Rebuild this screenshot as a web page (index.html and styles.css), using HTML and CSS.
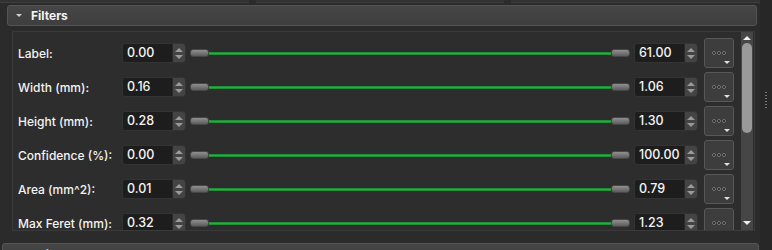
FILE: index.html
```html
<!DOCTYPE html>
<html lang="en">
<head>
    <meta charset="UTF-8">
    <title>Filters</title>
    <link rel="stylesheet" href="styles.css">
</head>
<body>
    <div class="window">
        <div class="main">
            <div class="tabs">
                <div class="tab"></div>
                <div class="tab"></div>
                <div class="tab"></div>
            </div>

            <div class="section-header"><span class="caret"></span>Filters</div>

            <div class="frame">
                <div class="rows">
                    <div class="row">
                        <span class="name">Label:</span>
                        <div class="spin"><span class="val">0.00</span><span class="arrows"><i class="up"></i><i class="down"></i></span></div>
                        <div class="range"><span class="knob"></span><span class="track"></span><span class="knob"></span></div>
                        <div class="spin"><span class="val">61.00</span><span class="arrows"><i class="up"></i><i class="down"></i></span></div>
                        <button class="more"><span class="dots"><i></i><i></i><i></i></span><span class="drop"></span></button>
                    </div>
                    <div class="row">
                        <span class="name">Width (mm):</span>
                        <div class="spin"><span class="val">0.16</span><span class="arrows"><i class="up"></i><i class="down"></i></span></div>
                        <div class="range"><span class="knob"></span><span class="track"></span><span class="knob"></span></div>
                        <div class="spin"><span class="val">1.06</span><span class="arrows"><i class="up"></i><i class="down"></i></span></div>
                        <button class="more"><span class="dots"><i></i><i></i><i></i></span><span class="drop"></span></button>
                    </div>
                    <div class="row">
                        <span class="name">Height (mm):</span>
                        <div class="spin"><span class="val">0.28</span><span class="arrows"><i class="up"></i><i class="down"></i></span></div>
                        <div class="range"><span class="knob"></span><span class="track"></span><span class="knob"></span></div>
                        <div class="spin"><span class="val">1.30</span><span class="arrows"><i class="up"></i><i class="down"></i></span></div>
                        <button class="more"><span class="dots"><i></i><i></i><i></i></span><span class="drop"></span></button>
                    </div>
                    <div class="row">
                        <span class="name">Confidence (%):</span>
                        <div class="spin"><span class="val">0.00</span><span class="arrows"><i class="up"></i><i class="down"></i></span></div>
                        <div class="range"><span class="knob"></span><span class="track"></span><span class="knob"></span></div>
                        <div class="spin"><span class="val">100.00</span><span class="arrows"><i class="up"></i><i class="down"></i></span></div>
                        <button class="more"><span class="dots"><i></i><i></i><i></i></span><span class="drop"></span></button>
                    </div>
                    <div class="row">
                        <span class="name">Area (mm^2):</span>
                        <div class="spin"><span class="val">0.01</span><span class="arrows"><i class="up"></i><i class="down"></i></span></div>
                        <div class="range"><span class="knob"></span><span class="track"></span><span class="knob"></span></div>
                        <div class="spin"><span class="val">0.79</span><span class="arrows"><i class="up"></i><i class="down"></i></span></div>
                        <button class="more"><span class="dots"><i></i><i></i><i></i></span><span class="drop"></span></button>
                    </div>
                    <div class="row">
                        <span class="name">Max Feret (mm):</span>
                        <div class="spin"><span class="val">0.32</span><span class="arrows"><i class="up"></i><i class="down"></i></span></div>
                        <div class="range"><span class="knob"></span><span class="track"></span><span class="knob"></span></div>
                        <div class="spin"><span class="val">1.23</span><span class="arrows"><i class="up"></i><i class="down"></i></span></div>
                        <button class="more"><span class="dots"><i></i><i></i><i></i></span><span class="drop"></span></button>
                    </div>
                </div>

                <div class="scrollbar">
                    <span class="arrow-up"></span>
                    <div class="groove"><span class="thumb"></span></div>
                    <span class="arrow-down"></span>
                </div>
            </div>

            <div class="section-header next"><span class="caret"></span>Edit</div>
        </div>

        <div class="splitter"><span class="grip"></span></div>
    </div>
</body>
</html>
```

FILE: styles.css
```css
html, body {
    margin: 0;
    padding: 0;
}
body {
    background-color: #2b2b2b;
    font-family: Inter, "Open Sans", "Liberation Sans", sans-serif;
    font-size: 12px;
    color: #f4f4f4;
    width: 772px;
    height: 250px;
    overflow: hidden;
}
.window {
    display: flex;
    height: 250px;
    overflow: hidden;
}
.main {
    width: 760px;
    height: 250px;
    overflow: hidden;
}
.tabs {
    display: flex;
    gap: 7px;
    height: 3px;
}
.tab {
    flex: 1;
    background-color: #323232;
    border-bottom: 1px solid #3e3e3e;
}
.section-header {
    margin: 2px 0 0 7px;
    width: 748px;
    height: 19px;
    border: 1px solid #555;
    border-radius: 3px;
    background: linear-gradient(#464646, #3e3e3e);
    display: flex;
    align-items: center;
    font-weight: 700;
    font-size: 12px;
}
.caret {
    width: 0;
    height: 0;
    border-left: 3px solid transparent;
    border-right: 3px solid transparent;
    border-top: 3px solid #d0d0d0;
    margin: 0 9px 0 8px;
}
.section-header.next {
    margin: 12px 0 0 2px;
    width: 757px;
    align-items: flex-start;
    padding-top: 3px;
    box-sizing: border-box;
    height: 19px;
}
.section-header.next .caret {
    margin: 5px 9px 0 13px;
}
.frame {
    margin: 5px 0 0 12px;
    width: 741px;
    height: 198px;
    border: 1px solid #3a3a3a;
    background-color: #2d2d2d;
    display: flex;
    overflow: hidden;
}
.rows {
    width: 728px;
    padding-top: 4px;
}
.row {
    height: 34px;
    display: flex;
    align-items: center;
    padding-left: 5px;
}
.name {
    width: 104px;
    font-weight: 500;
    font-size: 12px;
}
.spin {
    width: 64px;
    height: 20px;
    box-sizing: border-box;
    border: 1px solid #333;
    border-radius: 3px;
    background-color: #1d1d1d;
    display: flex;
}
.val {
    flex: 1;
    padding-left: 4px;
    line-height: 18px;
    font-size: 12.5px;
    font-weight: 500;
}
.arrows {
    width: 12px;
    background-color: #444;
    border-left: 1px solid #2a2a2a;
    border-radius: 0 2px 2px 0;
    display: flex;
    flex-direction: column;
    align-items: center;
    justify-content: center;
    gap: 3px;
}
.arrows i {
    width: 0;
    height: 0;
    border-left: 4px solid transparent;
    border-right: 4px solid transparent;
}
.arrows .up {
    border-bottom: 4px solid #9a9a9a;
}
.arrows .down {
    border-top: 4px solid #9a9a9a;
}
.range {
    width: 440px;
    margin: 0 4px;
    display: flex;
    align-items: center;
}
.knob {
    width: 19px;
    height: 8px;
    border-radius: 3px;
    background: linear-gradient(#909090, #5c5c5c);
    border: 1px solid #474747;
    box-sizing: border-box;
}
.track {
    flex: 1;
    height: 3px;
    background: linear-gradient(#1a7f30, #27ad45, #1a7f30);
}
.more {
    position: relative;
    width: 30px;
    height: 30px;
    margin-left: 6px;
    padding: 0;
    border: 1px solid #585858;
    border-radius: 3px;
    background-color: #3d3d3d;
    display: flex;
    align-items: center;
    justify-content: center;
}
.dots {
    display: flex;
    gap: 1px;
}
.dots i {
    width: 4px;
    height: 4px;
    border-radius: 50%;
    background-color: #1a1a1a;
    border: 1px solid #7a7a7a;
    box-sizing: border-box;
}
.drop {
    position: absolute;
    right: 3px;
    bottom: 3px;
    width: 0;
    height: 0;
    border-left: 3px solid transparent;
    border-right: 3px solid transparent;
    border-top: 3px solid #e0e0e0;
}
.scrollbar {
    width: 12px;
    background-color: #464646;
    display: flex;
    flex-direction: column;
    align-items: center;
}
.arrow-up, .arrow-down {
    width: 0;
    height: 0;
    border-left: 4px solid transparent;
    border-right: 4px solid transparent;
}
.arrow-up {
    margin-top: 4px;
    border-bottom: 4px solid #eee;
}
.arrow-down {
    margin-bottom: 5px;
    border-top: 4px solid #eee;
}
.groove {
    flex: 1;
    width: 10px;
    padding-top: 3px;
}
.thumb {
    display: block;
    width: 10px;
    height: 90px;
    border-radius: 5px;
    background-color: #9a9a9a;
}
.splitter {
    width: 12px;
    background-color: #272727;
    display: flex;
    justify-content: center;
    padding-top: 92px;
    box-sizing: border-box;
}
.grip {
    width: 2px;
    height: 16px;
    background: repeating-linear-gradient(#777 0 1px, transparent 1px 3px);
}
```
